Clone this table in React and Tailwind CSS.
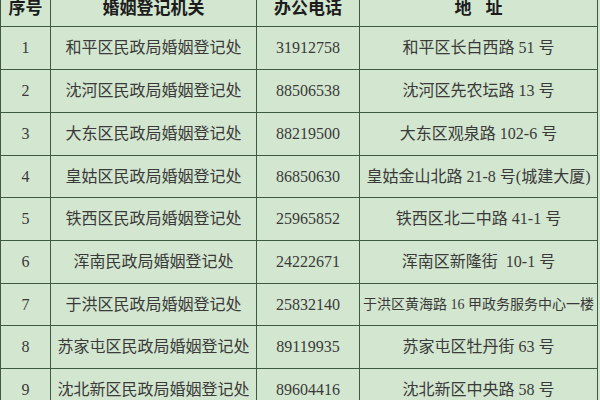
import React from "react";

const rows = [
  ["1", "和平区民政局婚姻登记处", "31912758", "和平区长白西路 51 号"],
  ["2", "沈河区民政局婚姻登记处", "88506538", "沈河区先农坛路 13 号"],
  ["3", "大东区民政局婚姻登记处", "88219500", "大东区观泉路 102-6 号"],
  ["4", "皇姑区民政局婚姻登记处", "86850630", "皇姑金山北路 21-8 号(城建大厦)"],
  ["5", "铁西区民政局婚姻登记处", "25965852", "铁西区北二中路 41-1 号"],
  ["6", "浑南民政局婚姻登记处", "24222671", "浑南区新隆街  10-1 号"],
  ["7", "于洪区民政局婚姻登记处", "25832140", "于洪区黄海路 16 甲政务服务中心一楼", true],
  ["8", "苏家屯区民政局婚姻登记处", "89119935", "苏家屯区牡丹街 63 号"],
  ["9", "沈北新区民政局婚姻登记处", "89604416", "沈北新区中央路 58 号"],
];

const head = "bg-[#d3e6cf] flex items-center justify-center text-[17px] font-bold text-[#1c1c1c] font-['Noto_Sans_CJK_SC','Liberation_Sans',sans-serif]";
const cell = "bg-[#d3e6cf] flex items-center justify-center text-[16px] text-[#3a3a3a] whitespace-pre font-['Liberation_Serif','Noto_Sans_CJK_SC',serif]";
const smallCell = "bg-[#d3e6cf] flex items-center justify-center text-[14px] text-[#3a3a3a] whitespace-pre font-['Liberation_Serif','Noto_Sans_CJK_SC',serif]";

export default function App() {
  return (
    <div className="w-[600px] h-[400px] overflow-hidden bg-[#d3e6cf]">
      {/* table grid: the dark background shows through the 1px gaps as rule lines */}
      <div className="-mt-[14px] w-[598px] grid grid-cols-[49px_205px_102px_237px] grid-rows-[39px_42px_42px_42px_41px_42px_42px_41px_42px_42px] gap-px p-px bg-[#3e5a40]">
        <div className={head}>序号</div>
        <div className={head}>婚姻登记机关</div>
        <div className={head}>办公电话</div>
        <div className={head}>
          <span>地</span>
          <span className="inline-block w-[14px]"></span>
          <span>址</span>
        </div>

        {rows.map((r) => (
          <React.Fragment key={r[0]}>
            <div className={cell}>{r[0]}</div>
            <div className={cell}>{r[1]}</div>
            <div className={cell}>{r[2]}</div>
            <div className={r[4] ? smallCell : cell}>{r[3]}</div>
          </React.Fragment>
        ))}
      </div>
    </div>
  );
}
